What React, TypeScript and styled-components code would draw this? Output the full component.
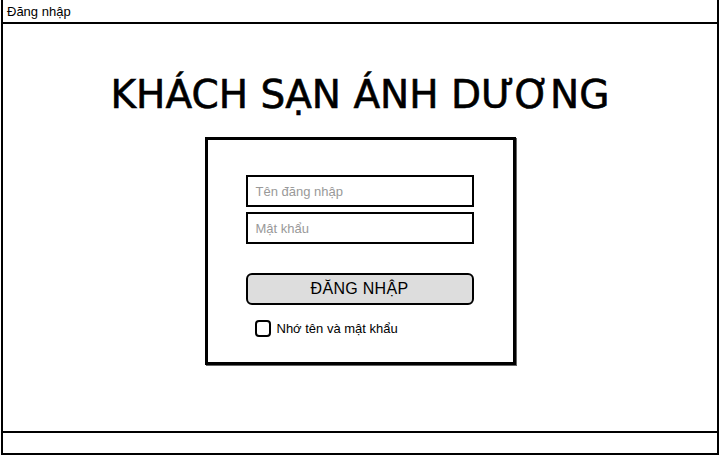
import React from "react";
import styled, { createGlobalStyle } from "styled-components";

const Global = createGlobalStyle`
  html, body { margin: 0; padding: 0; background: #fff; }
  body { font-family: "Liberation Sans", Arial, sans-serif; color: #000; }
`;

const Frame = styled.div`
  box-sizing: border-box;
  width: 718px;
  height: 455px;
  margin-left: 1px;
  border: 2px solid #000;
  border-top: none;
  display: flex;
  flex-direction: column;
`;

const TitleBar = styled.div`
  height: 22px;
  border-bottom: 2px solid #000;
  display: flex;
  align-items: center;
  padding-left: 4px;
  font-size: 13px;
`;

const Main = styled.div`
  flex: 1;
  display: flex;
  flex-direction: column;
  align-items: center;
`;

const Heading = styled.h1`
  margin: 49px 0 0 0;
  font-family: "DejaVu Sans", sans-serif;
  font-weight: normal;
  font-size: 39px;
  -webkit-text-stroke: 0.6px #000;
  line-height: 44px;
`;

const Card = styled.div`
  box-sizing: border-box;
  margin-top: 20px;
  width: 311px;
  height: 228px;
  border: 3px solid #000;
  box-shadow: 1px 1px 0 #666;
  padding: 35px 0 0 38px;
  display: flex;
  flex-direction: column;
`;

const Field = styled.div`
  box-sizing: border-box;
  width: 228px;
  height: 32px;
  border: 2px solid #000;
  margin-bottom: 5px;
  display: flex;
  align-items: center;
  padding-left: 8px;
  font-size: 13px;
  color: #999;
`;

const Button = styled.div`
  box-sizing: border-box;
  width: 228px;
  height: 32px;
  margin-top: 24px;
  border: 2px solid #000;
  border-radius: 6px;
  background: #ddd;
  display: flex;
  align-items: center;
  justify-content: center;
  font-size: 16px;
  letter-spacing: 0.3px;
`;

const CheckRow = styled.label`
  display: flex;
  align-items: center;
  gap: 6px;
  margin: 15px 0 0 9px;
  font-size: 13px;
`;

const Box = styled.span`
  box-sizing: border-box;
  width: 16px;
  height: 17px;
  border: 2px solid #000;
  border-radius: 4px;
`;

const Footer = styled.div`
  height: 20px;
  border-top: 2px solid #000;
`;

export default function App() {
  return (
    <>
      <Global />
      <Frame>
        <TitleBar>Đăng nhập</TitleBar>
        <Main>
          <Heading>KHÁCH SẠN ÁNH DƯƠNG</Heading>
          <Card>
            <Field>Tên đăng nhập</Field>
            <Field>Mật khẩu</Field>
            <Button>ĐĂNG NHẬP</Button>
            <CheckRow>
              <Box />
              Nhớ tên và mật khẩu
            </CheckRow>
          </Card>
        </Main>
        <Footer />
      </Frame>
    </>
  );
}
